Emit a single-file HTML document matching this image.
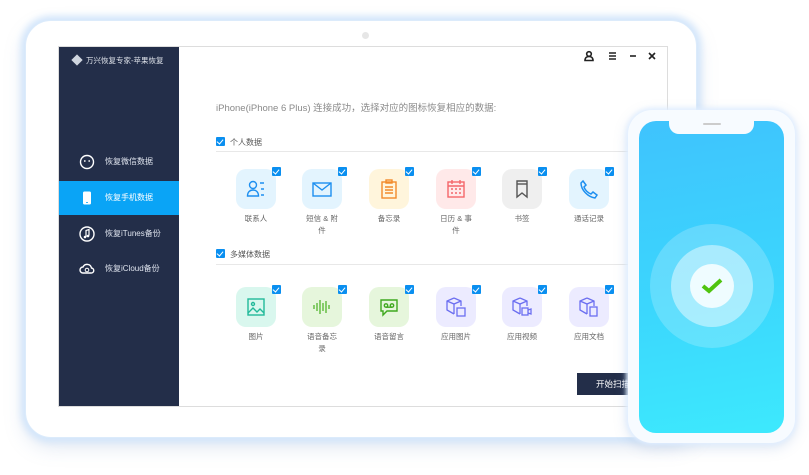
<!DOCTYPE html>
<html><head><meta charset="utf-8"><style>
*{margin:0;padding:0;box-sizing:border-box}
body{width:809px;height:475px;background:#fff;position:relative;overflow:hidden;font-family:"Liberation Sans","Noto Sans CJK SC",sans-serif;}
.tab{position:absolute;left:25px;top:20px;width:672px;height:418px;border-radius:26px;background:#fff;box-shadow:0 0 7px 4px #d3e6fb,0 8px 20px rgba(120,150,200,.25);border:1px solid #dcebfb}
.cam{position:absolute;left:362px;top:32px;width:7px;height:7px;border-radius:50%;background:#e6e6e6}
.scr{position:absolute;left:58px;top:46px;width:610px;height:361px;border:1px solid #ddd;background:#fff;overflow:hidden}
.side{position:absolute;left:0;top:0;width:120px;height:361px;background:#232e49}
.logo{position:absolute;left:14px;top:8px;color:#dfe3ea;font-size:7.5px}
.it{position:absolute;left:0;width:120px;height:34px;color:#dfe4ee;font-size:8px;line-height:34px;padding-left:46px}
.it.a{background:#0aa4f6;color:#fff}
.ic{position:absolute;left:20px;top:9px;width:16px;height:16px}
.tt{position:absolute;left:157px;top:53px;font-size:9.5px;color:#8a8a8a}
.sec{position:absolute;left:157px;font-size:8px;color:#555;}
.cb{display:inline-block;width:9px;height:9px;background:#0a8ff0;border-radius:1px;vertical-align:-1px;margin-right:5px;position:relative}
.cb:after{content:"";position:absolute;left:2px;top:1px;width:3px;height:5px;border:solid #fff;border-width:0 1.3px 1.3px 0;transform:rotate(40deg)}
.hr{position:absolute;left:157px;width:453px;height:1px;background:#e8e8e8}
.tile{position:absolute;width:40px;height:40px;border-radius:10px}
.tile .cb{position:absolute;right:-5px;top:-2px;margin:0}
.tile svg{position:absolute;left:10px;top:10px}
.lb{position:absolute;width:60px;text-align:center;font-size:7.5px;color:#666;line-height:12px}
.btn{position:absolute;left:518px;top:326px;width:90px;height:22px;background:#232e49;color:#fff;font-size:8.5px;line-height:22px;padding-left:19px}
.ph{position:absolute;left:628px;top:110px;width:167px;height:333px;border-radius:24px;background:#f7fbff;box-shadow:0 0 4px 2px #e2efff,0 4px 14px rgba(100,140,200,.25)}
.ps{position:absolute;left:11px;top:11px;width:145px;height:312px;border-radius:17px;background:linear-gradient(170deg,#3fc3fd,#3bd6fd 55%,#3de9fd);overflow:hidden}
.notch{position:absolute;left:30px;top:-1px;width:85px;height:14px;background:#f7fbff;border-radius:0 0 10px 10px}
.notch:after{content:"";position:absolute;left:34px;top:3px;width:18px;height:2px;background:#ccc;border-radius:1px}
.c{position:absolute;border-radius:50%}
</style></head><body>
<div class="tab"></div>
<div class="cam"></div>
<div class="scr">
 <div class="side">
  <div class="logo"><span style="display:inline-block;width:8px;height:8px;background:#cfd5df;transform:rotate(45deg);margin-right:5px;vertical-align:-1px"></span>万兴恢复专家-苹果恢复</div>
  <div class="it" style="top:98px"><svg class="ic" viewBox="0 0 16 16"><circle cx="8" cy="8" r="6.5" fill="none" stroke="#fff" stroke-width="1.4"/><circle cx="5.8" cy="7" r=".9" fill="#fff"/><circle cx="10.2" cy="7" r=".9" fill="#fff"/></svg>恢复微信数据</div>
  <div class="it a" style="top:134px"><svg class="ic" viewBox="0 0 16 16"><rect x="4" y="1.5" width="8" height="13" rx="1.5" fill="#fff"/><rect x="7" y="12" width="2" height=".8" fill="#0aa4f6"/></svg>恢复手机数据</div>
  <div class="it" style="top:170px"><svg class="ic" viewBox="0 0 16 16"><circle cx="8" cy="8" r="7" fill="none" stroke="#fff" stroke-width="1.4"/><path d="M7 11V4.5l3-1v6" fill="none" stroke="#fff" stroke-width="1.2"/><circle cx="6" cy="11" r="1.3" fill="#fff"/><circle cx="9" cy="10" r="1.3" fill="#fff"/></svg>恢复iTunes备份</div>
  <div class="it" style="top:205px"><svg class="ic" viewBox="0 0 16 16"><path d="M4 12a3 3 0 0 1 0-6 4.5 4.5 0 0 1 8.5 1A2.5 2.5 0 0 1 12 12z" fill="none" stroke="#fff" stroke-width="1.4"/><circle cx="8" cy="9" r="1.8" fill="none" stroke="#fff" stroke-width="1"/></svg>恢复iCloud备份</div>
 </div>
 <svg style="position:absolute;left:524px;top:3px" width="74" height="12" viewBox="0 0 74 12" fill="none" stroke="#222" stroke-width="1.6">
  <circle cx="6" cy="4" r="2.3"/><path d="M2 10.5c0-3 2-4 4-4s4 1 4 4z"/>
  <path d="M26 3h7M26 6h7M26 9h7"/>
  <path d="M47 6h6"/>
  <path d="M66 3l6 6M72 3l-6 6"/>
 </svg>
 <div class="tt">iPhone(iPhone 6 Plus) 连接成功，选择对应的图标恢复相应的数据:</div>
 <div class="sec" style="top:90px"><span class="cb"></span>个人数据</div>
 <div class="hr" style="top:104px"></div>
 <div class="sec" style="top:202px"><span class="cb"></span>多媒体数据</div>
 <div class="hr" style="top:217px"></div>

 <div class="tile" style="left:177px;top:122px;background:#e3f4fe"><svg width="20" height="20" viewBox="0 0 20 20" fill="none" stroke="#1d8ff0" stroke-width="1.4"><circle cx="7" cy="6" r="3.5"/><path d="M1.5 17c0-4 2.5-6 5.5-6s5.5 2 5.5 6z"/><path d="M14 4h4M15 10h3M15 16h3"/></svg><span class="cb"></span></div>
 <div class="tile" style="left:243px;top:122px;background:#e3f4fe"><svg width="20" height="20" viewBox="0 0 20 20" fill="none" stroke="#1d8ff0" stroke-width="1.4"><rect x="1" y="4" width="18" height="13"/><path d="M1 4l9 7 9-7"/></svg><span class="cb"></span></div>
 <div class="tile" style="left:310px;top:122px;background:#fff5dc"><svg width="20" height="20" viewBox="0 0 20 20" fill="none" stroke="#f28a2a" stroke-width="1.4"><rect x="3" y="3" width="14" height="16"/><rect x="7" y="1" width="6" height="3"/><path d="M6 8h8M6 11h8M6 14h8"/></svg><span class="cb"></span></div>
 <div class="tile" style="left:377px;top:122px;background:#ffe9e9"><svg width="20" height="20" viewBox="0 0 20 20" fill="none" stroke="#f4666a" stroke-width="1.4"><rect x="2" y="3" width="16" height="15"/><path d="M2 7h16M6 1v4M14 1v4M5 10h2M9 10h2M13 10h2M5 14h2M9 14h2M13 14h2"/></svg><span class="cb"></span></div>
 <div class="tile" style="left:443px;top:122px;background:#efefef"><svg width="20" height="20" viewBox="0 0 20 20" fill="none" stroke="#555" stroke-width="1.4"><path d="M5 2h10v16l-5-4-5 4z"/><path d="M5 5h10"/></svg><span class="cb"></span></div>
 <div class="tile" style="left:510px;top:122px;background:#e3f4fe"><svg width="20" height="20" viewBox="0 0 20 20" fill="none" stroke="#1d8ff0" stroke-width="1.5"><path d="M4 2l3 4-2 2c1 3 4 6 7 7l2-2 4 3-2 3C9 18 2 11 2 4z"/></svg><span class="cb"></span></div>

 <div class="lb" style="left:167px;top:166px">联系人</div>
 <div class="lb" style="left:233px;top:166px">短信 &amp; 附<br>件</div>
 <div class="lb" style="left:300px;top:166px">备忘录</div>
 <div class="lb" style="left:367px;top:166px">日历 &amp; 事<br>件</div>
 <div class="lb" style="left:433px;top:166px">书签</div>
 <div class="lb" style="left:500px;top:166px">通话记录</div>

 <div class="tile" style="left:177px;top:240px;background:#d9f7ee"><svg width="20" height="20" viewBox="0 0 20 20" fill="none" stroke="#22b99a" stroke-width="1.4"><rect x="2" y="2" width="16" height="16"/><circle cx="7" cy="7" r="1.5"/><path d="M2 16l5-5 4 4 3-3 4 4"/></svg><span class="cb"></span></div>
 <div class="tile" style="left:243px;top:240px;background:#e6f6dc"><svg width="20" height="20" viewBox="0 0 20 20" fill="none" stroke="#5cba3a" stroke-width="1.4"><path d="M2 8v4M5 6v8M8 3v14M11 6v8M14 4v12M17 8v4"/></svg><span class="cb"></span></div>
 <div class="tile" style="left:310px;top:240px;background:#e6f6dc"><svg width="20" height="20" viewBox="0 0 20 20" fill="none" stroke="#3fa81f" stroke-width="1.4"><path d="M2 3h16v11H8l-4 4v-4H2z"/><circle cx="7" cy="8.5" r="1.7"/><circle cx="13" cy="8.5" r="1.7"/><path d="M7 10.2h6"/></svg><span class="cb"></span></div>
 <div class="tile" style="left:377px;top:240px;background:#ecebff"><svg width="20" height="20" viewBox="0 0 20 20" fill="none" stroke="#6b6ef0" stroke-width="1.3"><path d="M8 1l7 3v5M8 1L1 4v9l7 4M1 4l7 3 7-3M8 7v10"/><rect x="11" y="11" width="8" height="8"/></svg><span class="cb"></span></div>
 <div class="tile" style="left:443px;top:240px;background:#ecebff"><svg width="20" height="20" viewBox="0 0 20 20" fill="none" stroke="#6b6ef0" stroke-width="1.3"><path d="M8 1l7 3v5M8 1L1 4v9l7 4M1 4l7 3 7-3M8 7v10"/><rect x="10" y="11" width="6" height="7"/><path d="M16 13l3-1v5l-3-1"/></svg><span class="cb"></span></div>
 <div class="tile" style="left:510px;top:240px;background:#ecebff"><svg width="20" height="20" viewBox="0 0 20 20" fill="none" stroke="#6b6ef0" stroke-width="1.3"><path d="M8 1l7 3v5M8 1L1 4v9l7 4M1 4l7 3 7-3M8 7v10"/><rect x="11" y="10" width="7" height="9"/></svg><span class="cb"></span></div>

 <div class="lb" style="left:167px;top:284px">图片</div>
 <div class="lb" style="left:233px;top:284px">语音备忘<br>录</div>
 <div class="lb" style="left:300px;top:284px">语音留言</div>
 <div class="lb" style="left:367px;top:284px">应用图片</div>
 <div class="lb" style="left:433px;top:284px">应用视频</div>
 <div class="lb" style="left:500px;top:284px">应用文档</div>
 <div class="btn">开始扫描</div>
</div>
<div class="ph"><div class="ps">
 <div class="notch"></div>
 <div class="c" style="left:11px;top:103px;width:124px;height:124px;background:rgba(255,255,255,.2)"></div>
 <div class="c" style="left:32px;top:124px;width:82px;height:82px;background:rgba(255,255,255,.45)"></div>
 <div class="c" style="left:51px;top:143px;width:44px;height:44px;background:#effcff"></div>
 <svg style="position:absolute;left:61px;top:155px" width="24" height="20" viewBox="0 0 24 20"><path d="M3 10l6 5L21 4" fill="none" stroke="#4fc40f" stroke-width="4"/></svg>
</div></div>
</body></html>
